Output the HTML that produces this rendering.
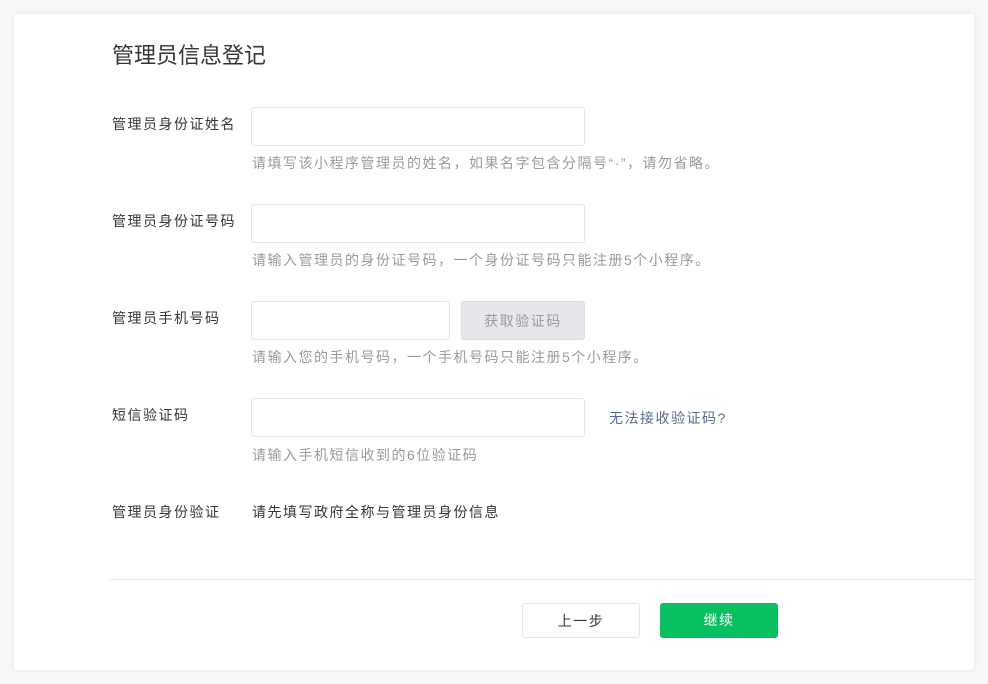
<!DOCTYPE html>
<html><head><meta charset="utf-8"><style>
*{box-sizing:border-box;margin:0;padding:0}
body{width:988px;height:684px;background:#f7f7f7;font-family:"Liberation Sans","Noto Sans CJK SC",sans-serif;position:relative;overflow:hidden}
.card{position:absolute;left:14px;top:14px;width:960px;height:656px;background:#fff;box-shadow:0 0 6px rgba(0,0,0,.06)}
.abs{position:absolute}
.t{left:98px;top:26px;font-size:22px;color:#353535;line-height:32px}
.l{left:98px;font-size:14px;color:#353535;line-height:20px;letter-spacing:1.5px}
.in{left:237px;width:334px;height:39px;border:1px solid #e4e4e4;border-radius:3px}
.h{left:238px;font-size:14px;color:#9a9a9a;line-height:20px;letter-spacing:1.5px}
.btn{border-radius:3px;font-size:14px;text-align:center;line-height:35px;letter-spacing:1.5px}
</style></head><body><div class="card">
<div class="abs t">管理员信息登记</div>
<div class="abs l" style="top:100px">管理员身份证姓名</div>
<div class="abs in" style="top:93px"></div>
<div class="abs h" style="top:139px">请填写该小程序管理员的姓名，如果名字包含分隔号“·”，请勿省略。</div>
<div class="abs l" style="top:197px">管理员身份证号码</div>
<div class="abs in" style="top:190px"></div>
<div class="abs h" style="top:236px">请输入管理员的身份证号码，一个身份证号码只能注册5个小程序。</div>
<div class="abs l" style="top:294px">管理员手机号码</div>
<div class="abs in" style="top:287px;width:199px"></div>
<div class="abs btn" style="left:447px;top:287px;width:124px;height:39px;line-height:39px;background:#e7e7eb;border:1px solid #dcdce0;color:#9a9a9a">获取验证码</div>
<div class="abs h" style="top:333px">请输入您的手机号码，一个手机号码只能注册5个小程序。</div>
<div class="abs l" style="top:391px">短信验证码</div>
<div class="abs in" style="top:384px"></div>
<div class="abs" style="left:595px;top:394px;font-size:14px;color:#576b95;line-height:20px;letter-spacing:1.5px">无法接收验证码?</div>
<div class="abs h" style="top:431px">请输入手机短信收到的6位验证码</div>
<div class="abs l" style="top:488px">管理员身份验证</div>
<div class="abs l" style="left:238px;top:488px">请先填写政府全称与管理员身份信息</div>
<div class="abs" style="left:96px;top:565px;width:864px;height:1px;background:#e7e7e7"></div>
<div class="abs btn" style="left:508px;top:589px;width:118px;height:35px;border:1px solid #e4e4e4;color:#353535">上一步</div>
<div class="abs btn" style="left:646px;top:589px;width:118px;height:35px;background:#07c160;color:#fff">继续</div>
</div></body></html>
